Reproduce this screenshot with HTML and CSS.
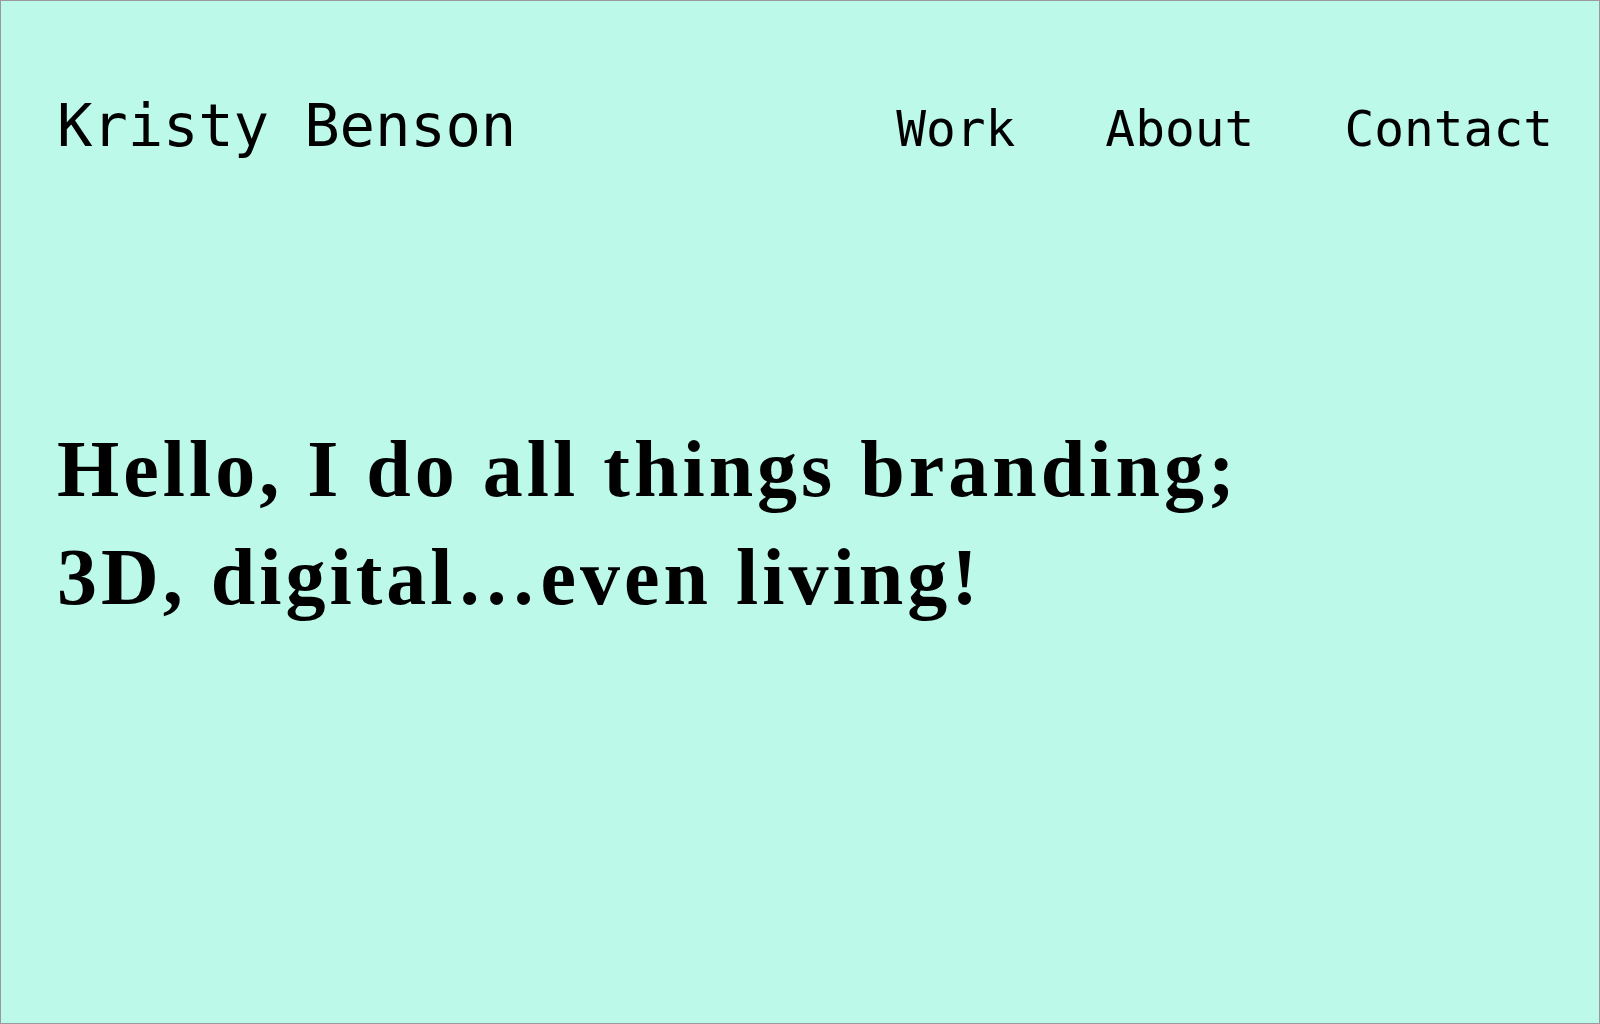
FILE: index.html
```html
<!DOCTYPE html>
<html lang="en">
<head>
<meta charset="utf-8">
<title>Kristy Benson</title>
<link rel="stylesheet" href="styles.css">
</head>
<body>
<div class="page">
  <header class="site-header">
    <a class="logo" href="#">Kristy Benson</a>
    <nav class="nav">
      <a class="nav-link" href="#">Work</a>
      <a class="nav-link" href="#">About</a>
      <a class="nav-link" href="#">Contact</a>
    </nav>
  </header>
  <main class="hero">
    <h1 class="hero-title">Hello, I do all things branding;<br>3D, digital…even living!</h1>
  </main>
</div>
</body>
</html>
```
FILE: styles.css
```css
html, body {
  margin: 0;
  padding: 0;
}
body {
  background: #bcf9e9;
  color: #000;
}
.page {
  box-sizing: border-box;
  width: 1600px;
  height: 1024px;
  border: 1px solid #9a9a9a;
  padding: 0 46px 0 56px;
  background: #bcf9e9;
}
.site-header {
  display: flex;
  justify-content: space-between;
  align-items: baseline;
  padding-top: 89px;
}
.logo {
  font-family: "DejaVu Sans Mono", "Liberation Mono", monospace;
  font-size: 59px;
  line-height: 72px;
  letter-spacing: -0.2px;
  color: #000;
  text-decoration: none;
}
.nav {
  display: flex;
  gap: 90px;
}
.nav-link {
  font-family: "DejaVu Sans Mono", "Liberation Mono", monospace;
  font-size: 49.5px;
  line-height: 60px;
  letter-spacing: 0;
  color: #000;
  text-decoration: none;
}
.hero {
  margin-top: 253px;
}
.hero-title {
  margin: 0;
  font-family: "Liberation Serif", "DejaVu Serif", serif;
  font-weight: 700;
  font-size: 80px;
  line-height: 108px;
  letter-spacing: 4px;
}
```
